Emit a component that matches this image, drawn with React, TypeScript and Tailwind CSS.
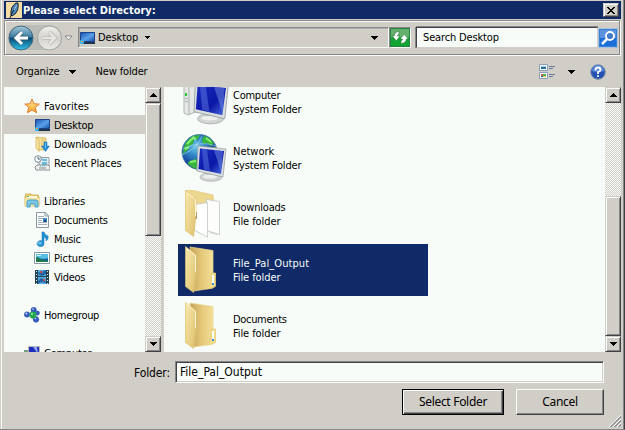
import React from "react";

const raised =
  "border border-t-[#d0cec6] border-l-[#d0cec6] border-r-[#424245] border-b-[#424245] bg-[#d0cec6] shadow-[inset_1px_1px_0_#f9fcf8,inset_-1px_-1px_0_#85858a]";
const dither =
  "bg-[conic-gradient(#d0cec6_25%,#f7fcf8_0_50%,#d0cec6_0_75%,#f7fcf8_0)] bg-[length:2px_2px]";

function Tri({ up = false, className = "" }: { up?: boolean; className?: string }) {
  return (
    <svg className={`shrink-0 ${className}`} width="7" height="4" viewBox="0 0 7 4" shapeRendering="crispEdges">
      <path d={up ? "M3 0h1v1h1v1h1v1h1v1H0V3h1V2h1V1h1z" : "M0 0h7v1H6v1H5v1H4v1H3V3H2V2H1V1H0z"} fill="#000" />
    </svg>
  );
}

function ScrollBar({ before, thumb }: { before: string; thumb: string }) {
  return (
    <div className={`flex w-4 shrink-0 flex-col ${dither}`}>
      <div className={`flex h-4 shrink-0 items-center justify-center ${raised}`}><Tri up /></div>
      <div className={`shrink-0 ${before}`} />
      <div className={`shrink-0 ${thumb} ${raised}`} />
      <div className="flex-1" />
      <div className={`flex h-4 shrink-0 items-center justify-center ${raised}`}><Tri /></div>
    </div>
  );
}

function DesktopIcon() {
  return (
    <svg className="shrink-0" width="16" height="16" viewBox="0 0 16 16">
      <defs><linearGradient id="desk" x1="0" y1="0" x2="1" y2="1"><stop stopColor="#1551b5" /><stop offset=".55" stopColor="#5ba1e8" /><stop offset="1" stopColor="#174fa7" /></linearGradient></defs>
      <path d="M1 2h15v12H1z" fill="#bac7d6" /><path d="M1.5 2.5h14v9h-14z" fill="url(#desk)" stroke="#1e4389" />
      <path d="M2 12h14v2H2z" fill="#1b3450" /><circle cx="3" cy="12" r="2.2" fill="#38b7ed" /><path d="M2 11h1v1H2z" fill="#f9cd3e" /><path d="M3 11h1v1H3z" fill="#e75b32" />
    </svg>
  );
}
function StarIcon() {
  return <svg width="16" height="16" viewBox="0 0 16 16"><defs><linearGradient id="star" x1="0" y1="0" x2="0" y2="1"><stop stopColor="#fff1a1" /><stop offset="1" stopColor="#f5a323" /></linearGradient></defs><path d="M8 1l2 4.8 5.3.3-4.1 3.4 1.5 5.3L8 12l-4.6 2.8 1.4-5.3L.8 6.1 6 5.8z" fill="url(#star)" stroke="#e37a2c" /></svg>;
}
function DownloadIcon() {
  return <svg width="16" height="16" viewBox="0 0 16 16"><path d="M3 1l9 1v12H5z" fill="#ecd389" stroke="#dab757" strokeWidth=".7" /><path d="M6 2v11" stroke="#fff5c2" /><path d="M2 1l3 2.5v12L2 12z" fill="#f9e5a3" stroke="#cfaa45" strokeWidth=".7" /><path d="M10 6h3v4h2.5l-4 5.5-4-5.5H10z" fill="#258fd9" stroke="#176bb4" strokeWidth=".5" /><path d="M11 7h1v5h-1z" fill="#68c6f2" /></svg>;
}
function RecentIcon() {
  return <svg width="16" height="16" viewBox="0 0 16 16"><path d="M5 2.5h10v9H5z" fill="#e3ecf2" stroke="#939ca4" /><path d="M7 4h6v2H9zM8 7h5v3H8z" fill="#65bbdb" /><path d="M1 12l2-2h11l2 2v3H2z" fill="#ecefee" stroke="#8c9293" /><path d="M5 13h7" stroke="#889399" /><circle cx="4" cy="4" r="3.3" fill="#f7fbfc" stroke="#7d8b96" /><path d="M4 2v2h2" fill="none" stroke="#436278" /><path d="M6 11h1M8 11h1M10 11h1" stroke="#64aac6" /></svg>;
}
function LibraryIcon() {
  return <svg width="16" height="16" viewBox="0 0 16 16"><path d="M1 3l1-2h5l1 1h6l1 2v9H1z" fill="#e9cc72" stroke="#cca544" strokeWidth=".8" /><path d="M3 3h10v2H3z" fill="#f9fae0" /><path d="M3 3h2v1H3z" fill="#51b97a" /><path d="M1 5h14v8H1z" fill="#f8e39b" /><path d="M3 14V9q0-2 2-2h7q2 0 2 2v5h-3v-3H6v3z" fill="#7cc7e8" stroke="#4b9fc6" /></svg>;
}
function DocumentIcon() {
  return <svg width="16" height="16" viewBox="0 0 16 16"><path d="M2.5.5h9l3 3v12h-12z" fill="#fff" stroke="#899aa2" /><path d="M11 .5V4h3.5" fill="#dce9ef" stroke="#899aa2" /><path d="M4 4.5h6M4 6.5h5M4 8.5h4M4 10.5h9M4 12.5h9" stroke="#a3b0be" /><path d="M9 6h4v4H9z" fill="#3c8dc4" /><path d="M10 8h2v2h-2z" fill="#253e7c" /></svg>;
}
function MusicIcon() {
  return <svg width="16" height="16" viewBox="0 0 16 16"><path d="M8 1h2q1 3 4 4 1 3-2 5 1-3-2-4v7c0 4-8 3-7-1 1-2 3-3 5-2z" fill="#2390d4" stroke="#1976ad" strokeWidth=".5" /><ellipse cx="5.5" cy="12" rx="2.5" ry="1.5" fill="#67bcec" /></svg>;
}
function PictureIcon() {
  return <svg width="16" height="16" viewBox="0 0 16 16"><path d="M.5 2.5h15v11H.5z" fill="#fff" stroke="#8999a0" /><path d="M2 4h12v8H2z" fill="#57bfe6" /><path d="M2 7c4 1 6 3 12 1v4H2z" fill="#12679c" /><path d="M2 7c3 0 4 3 7 3l5 1v1H2z" fill="#24794d" /><path d="M3 5h4v1H3z" fill="#cceff8" /></svg>;
}
function VideoIcon() {
  return <svg width="16" height="16" viewBox="0 0 16 16"><path d="M1 1h14v14H1z" fill="#244452" /><path d="M4 1h8v6H4zM4 8h8v7H4z" fill="#55aee2" /><path d="M4 3l4 1 2-3 2 1v3L8 7 5 6zM4 12l3-3 4 2 1 3-5-1-3 2z" fill="#2264a6" /><path d="M6 2h2v2H6zM9 10h2v2H9z" fill="#c44f3c" /><path d="M2 2h1v1H2zm0 3h1v1H2zm0 3h1v1H2zm0 3h1v1H2zm0 3h1v1H2zM13 2h1v1h-1zm0 3h1v1h-1zm0 3h1v1h-1zm0 3h1v1h-1zm0 3h1v1h-1z" fill="#d5edf2" /></svg>;
}
function HomegroupIcon() {
  return <svg width="16" height="16" viewBox="0 0 16 16"><g stroke="#b8ceed" strokeWidth="1.5"><path d="M3 8l7-4 4 3-2 6z" fill="none" /></g><g fill="#365bc3" stroke="#2449a0" strokeWidth=".5"><circle cx="3" cy="7.5" r="2.7" /><circle cx="9.7" cy="3" r="2.7" /><circle cx="13.5" cy="6" r="2" /><circle cx="12" cy="12.5" r="2.8" /></g><circle cx="9" cy="8" r="3.4" fill="#21a84b" /><g fill="#cfe2fb"><circle cx="2.4" cy="6.5" r=".9" /><circle cx="9" cy="2" r=".8" /><circle cx="11.4" cy="11.5" r=".8" /></g><circle cx="8" cy="7" r="1" fill="#a8edaf" /></svg>;
}
function SmallComputerIcon() {
  return <svg width="16" height="16" viewBox="0 0 16 16"><path d="M0 5h4v7H0z" fill="#7d918d" /><path d="M1 6h1v1H1z" fill="#35c953" /><path d="M4.5 1.5h11v10h-11z" fill="#1c2ebb" stroke="#b8b8b4" /><path d="M9 2h4l1 7z" fill="#8aa4ee" /></svg>;
}

function Monitor() {
  return (
    <g>
      <ellipse cx="31" cy="43" rx="11" ry="4.3" fill="#d2d5d3" stroke="#aab0b0" strokeWidth=".8" />
      <path d="M27 37l8 2-1 5q-4 1-7-1z" fill="#b4bbbe" />
      <ellipse cx="30" cy="42.5" rx="7" ry="2" fill="#eef0ee" />
      <path d="M18 12l28 3-3 28-26-6z" fill="#dcdfdf" stroke="#9aa3a7" strokeWidth=".8" />
      <path d="M20 14.500l24 2.500-3 23-22.500-5z" fill="url(#screen)" />
      <path d="M22 15l5 .5 3 21.500-6-1.500z" fill="#6f92ea" opacity=".4" />
      <path d="M34 16l9 1-2 21z" fill="#7d9eec" opacity=".45" />
    </g>
  );
}
function ComputerIcon() {
  return (
    <svg className="shrink-0 overflow-visible" width="48" height="48" viewBox="0 0 48 48">
      <defs><linearGradient id="screen" x1="0" y1="0" x2="1" y2="1"><stop stopColor="#1b2cc0" /><stop offset=".6" stopColor="#0b17a6" /><stop offset="1" stopColor="#4c70e0" /></linearGradient></defs>
      <path d="M4 8l6-2 8 1v26l-10 4-4-2z" fill="#e4e7e4" stroke="#aeb5b3" /><path d="M9 9v27M5 20l3 1M5 23l3 1" stroke="#a9b3b3" /><path d="M5 15h2v3H5z" fill="#23c928" />
      <g transform="translate(-6 -10) scale(1.18)"><Monitor /></g>
    </svg>
  );
}
function NetworkIcon() {
  return (
    <svg className="shrink-0" width="48" height="48" viewBox="0 0 48 48">
      <defs><radialGradient id="globe" cx=".4" cy=".35"><stop stopColor="#6cc4e6" /><stop offset=".5" stopColor="#3389c9" /><stop offset="1" stopColor="#174a9c" /></radialGradient></defs>
      <circle cx="19.500" cy="18" r="17.500" fill="url(#globe)" stroke="#4a7da0" strokeWidth=".8" />
      <path d="M4 13q2-7 9-11l7-1-2 4-4 1-1 4-4 2-1 4-3 2-2 3zM24 2q6 1 10 7l-3 3-4-3-4 1-1-4zM8 28l7-3 5 2-1 8q-6 0-11-5zM31 14l5-1 1 6-4-1z" fill="#37b53c" />
      <path d="M7 10l6-6 3 1M10 28l6-1M26 4l5 4M5 15l4-2" stroke="#86ef72" strokeWidth="2" fill="none" />
      <path d="M3 15q18-9 33-3M2 21q16-7 20-19M13 2q9 14 4 33" fill="none" stroke="#b8e5ef" opacity=".55" />
      <Monitor />
    </svg>
  );
}
function FolderIcon({ papers = false }: { papers?: boolean }) {
  const id = papers ? "folder-paper" : "folder-plain";
  return (
    <svg className="shrink-0" width="48" height="48" viewBox="0 0 48 48">
      <defs>
        <linearGradient id={id}><stop stopColor="#c5a45a" /><stop offset=".5" stopColor="#e4c878" /><stop offset="1" stopColor="#f3e09a" /></linearGradient>
        <linearGradient id={`${id}-front`} x1="0" y1="0" x2="1" y2="1"><stop stopColor="#f8e9ac" /><stop offset="1" stopColor="#dfc06c" /></linearGradient>
      </defs>
      {papers ? (
        <>
          <path d="M6 0h5l22 5 1 8-18 20z" fill="#edd78e" stroke="#dfc677" strokeWidth=".7" />
          <path d="M34 41l6 2-3 2-8-2z" fill="#d8dad6" />
          <path d="M26.500 9.500l13 2v33l-13-4z" fill="#fdfefc" stroke="#c2c6c2" strokeWidth=".8" />
          <path d="M15 14.500l12.500-2v34.500L14 40z" fill="#fff" stroke="#c2c6c2" strokeWidth=".8" />
          <path d="M15 22h2v7h-2z" fill="#8f8d70" />
        </>
      ) : (
        <>
          <path d="M10 1l23 3.500V42l-19 3z" fill={`url(#${id})`} stroke="#ecd790" strokeWidth=".7" />
          <path d="M31 27h4.500v13.500L32 42l-6 1 5-5z" fill="#f4dc86" stroke="#e6cb78" strokeWidth=".8" />
          <path d="M32 29h2v8h-2z" fill="#fff" /><path d="M32 37h2v2h-2z" fill="#3b8ee0" />
        </>
      )}
      <path d="M5.500.500L16 9v17l-2.500 20.500-8-6z" fill={`url(#${id}-front)`} stroke="#dcc070" strokeWidth=".7" />
      <path d="M6.500 2l9 7.500V26" fill="none" stroke="#fdf5cf" />
    </svg>
  );
}

function SideRow({ icon, label, nested = false, selected = false, spacing = "" }: { icon: React.ReactNode; label: string; nested?: boolean; selected?: boolean; spacing?: string }) {
  return (
    <div className={`flex h-[19px] shrink-0 items-center gap-1 ${nested ? "pl-[30px]" : "pl-5"} ${selected ? "bg-[#d0cec6]" : ""}`}>
      {icon}<span className={`pt-0.5 ${spacing}`}>{label}</span>
    </div>
  );
}
function FileRow({ icon, name, kind, kindSpacing = "tracking-[-0.09px]", selected = false, spacing = "" }: { icon: React.ReactNode; name: string; kind: string; kindSpacing?: string; selected?: boolean; spacing?: string }) {
  return (
    <div className={`flex h-[52px] w-[250px] shrink-0 items-center gap-[5px] pl-0.5 ${selected ? "bg-[#0f2a66] text-[#f7fcf8]" : ""}`}>
      {icon}
      <div className="pt-0.5 leading-[14px]"><div className={spacing}>{name}</div><div className={kindSpacing}>{kind}</div></div>
    </div>
  );
}

export default function App() {
  return (
    <div className="flex h-[430px] w-[625px] flex-col overflow-hidden border-r border-b border-r-[#424245] border-b-[#85858a] bg-[#d0cec6] pt-px pr-[3px] pl-[4px] font-['DejaVu_Sans_Condensed','DejaVu_Sans',sans-serif] text-[11px] leading-[14px] whitespace-nowrap text-black shadow-[inset_1px_0_0_#d0cec6,inset_2px_0_0_#f7fcf8,inset_-1px_0_0_#85858a]">
      <header className="flex h-[18px] shrink-0 items-center bg-[#0f2a66] pr-0.5 pl-0.5 text-[#f7fcf8]">
        <svg width="16" height="16" viewBox="0 0 16 16"><path d="M0 0h16v16H0z" fill="#f6dca2" /><path d="M5 13q-1-8 5-12l2 0q1 7-3 11l-3 2z" fill="#4c86bd" stroke="#15202c" /><path d="M4 16l2-5 5-8" stroke="#14202b" fill="none" /><path d="M8 8l3-5" stroke="#a9d4ed" /></svg>
        <span className="ml-px flex-1 pt-px font-bold">Please select Directory:</span>
        <button className={`flex h-[14px] w-4 items-center justify-center ${raised}`}><svg width="8" height="7" viewBox="0 0 8 7" shapeRendering="crispEdges"><path d="M0 0h2v1h1v1h2V1h1V0h2v1H7v1H6v1H5v1h1v1h1v1h1v1H6V6H5V5H3v1H2v1H0V6h1V5h1V4h1V3H2V2H1V1H0z" fill="#000" /></svg></button>
      </header>

      <nav className="mt-px mr-px flex h-[35px] shrink-0 items-center border border-[#85858a] shadow-[inset_1px_1px_0_#f7fcf8,inset_-1px_-1px_0_#d0cec6,1px_1px_0_#f7fcf8]">
        <svg className="ml-[3px] shrink-0" width="65" height="30" viewBox="0 0 65 30">
          <defs>
            <linearGradient id="back" x1="0" y1="0" x2="0" y2="1"><stop stopColor="#a9cadb" /><stop offset=".46" stopColor="#397b9f" /><stop offset=".5" stopColor="#0a4770" /><stop offset="1" stopColor="#30c6ed" /></linearGradient>
            <linearGradient id="forward" x1="0" y1="0" x2="0" y2="1"><stop stopColor="#f0f0ed" /><stop offset=".5" stopColor="#d3d2cc" /><stop offset="1" stopColor="#eceae6" /></linearGradient>
          </defs>
          <path d="M13 2h28q13 1 13 13t-13 12H13Q0 27 0 15T13 2z" fill="#bbbdb9" />
          <circle cx="13" cy="15" r="12" fill="url(#back)" stroke="#43687c" /><circle cx="41.500" cy="15" r="12" fill="url(#forward)" stroke="#a2a5a2" />
          <path d="M20 15H8m6-6l-6 6 6 6" fill="none" stroke="#315c75" strokeWidth="4.500" /><path d="M20 15H8m6-6l-6 6 6 6" fill="none" stroke="#fff" strokeWidth="3" />
          <path d="M35 15h12m-6-6l6 6-6 6" fill="none" stroke="#b4b5b1" strokeWidth="4" /><path d="M35 15h12m-6-6l6 6-6 6" fill="none" stroke="#e6e5e1" strokeWidth="2.500" />
          <path d="M57 13h7l-3.500 4z" fill="#f7fcf8" stroke="#85858a" />
        </svg>
        <div className="ml-[5px] flex h-[21px] w-[311px] shrink-0 items-center border-t border-r border-b border-l border-t-[#85858a] border-r-[#f7fcf8] border-b-[#f7fcf8] border-l-[#85858a] shadow-[inset_1px_1px_0_#b0aea9]">
          <DesktopIcon /><span className="ml-[3px] tracking-[-0.1px]">Desktop</span><Tri className="ml-[7px] h-[3px] w-[5px]" />
          <div className="flex-1" /><Tri className="mr-[10px]" />
        </div>
        <button className="flex h-[21px] w-[22px] shrink-0 items-center justify-center border border-[#85858a] border-r-[#f7fcf8] border-b-[#f7fcf8]">
          <svg className="shrink-0" width="20" height="19" viewBox="0 0 19 18" preserveAspectRatio="none"><path d="M0 0h19v18H0z" fill="#25863d" /><path d="M1 1h17v8H1z" fill="#66b06d" /><path d="M1 9h17v8H1z" fill="#13a533" /><path d="M8.500 3v2.500L7 7.500h2.500L6 12 2 7.500h2Q4 4 8.500 3zM10.500 15v-2.500l1.500-2H9.500L13.500 6l4 4.500h-2q0 3.500-5 4.500z" fill="#fff" stroke="#1b6e31" strokeWidth=".5" /></svg>
        </button>
        <div className="ml-[5px] flex h-[21px] w-[182px] shrink-0 items-center border border-t-[#424245] border-r-[#d0cec6] border-b-[#d0cec6] border-l-[#424245] bg-[#f7fcf8] pl-[6px] tracking-[-0.15px] shadow-[0_-1px_0_#85858a,-1px_0_0_#85858a]"><span className="pt-px">Search Desktop</span></div>
        <svg className="shrink-0" width="20" height="20" viewBox="0 0 20 20"><path d="M.5.500h19v19H.5z" fill="#3a7fd0" stroke="#a9c2e0" /><path d="M2 2h16v8H2z" fill="#5a92dd" /><path d="M2 10h16v8H2z" fill="#1a6fd8" /><path d="M4 16l5-5" stroke="#fff" strokeWidth="2.500" /><circle cx="12" cy="8" r="4" fill="#447bc8" stroke="#fff" strokeWidth="1.800" /></svg>
      </nav>

      <div className="flex h-8 shrink-0 items-center pt-px pl-3">
        <span className="tracking-[-0.1px]">Organize</span><Tri className="ml-[9px]" /><span className="ml-5 tracking-[-0.15px]">New folder</span>
        <div className="flex-1" />
        <svg width="16" height="16" viewBox="0 0 16 16"><path d="M.5.500h8v6h-8zM.5 8.500h8v6h-8z" fill="#f7fcf8" stroke="#8b9fba" /><path d="M2 2h5v1H2z" fill="#9ccfe6" /><path d="M2 3h5v2H2z" fill="#28709b" /><path d="M2 10h2v2H2z" fill="#d85e45" /><path d="M4 10h3v2H4z" fill="#40b452" /><path d="M2 12h2v1H2z" fill="#2b64c5" /><path d="M4 12h3v1H4z" fill="#f1c33f" /><path d="M10 2.500h6M10 4.500h4M10 10.500h6M10 12.500h4" stroke="#687a95" /></svg>
        <Tri className="ml-[13px]" />
        <svg className="mr-[15px] ml-[15px]" width="16" height="16" viewBox="0 0 16 16"><circle cx="8" cy="8" r="7.300" fill="#2552b1" stroke="#8291ab" /><path d="M2 7a6 6 0 0112 0q-6 2-12 0" fill="#5b89d8" /><path d="M5.500 6.500q0-3 2.500-3t2.500 2.300q0 1.400-2.500 2.400V10M8 11.200v1.800" fill="none" stroke="#fff" strokeWidth="1.800" /></svg>
      </div>

      <main className="flex h-[265px] shrink-0 bg-[#f7fcf8]">
        <aside className="flex w-[141px] shrink-0 flex-col overflow-hidden pt-[9px]">
          <SideRow icon={<StarIcon />} label="Favorites" spacing="tracking-[0.05px]" />
          <SideRow icon={<DesktopIcon />} label="Desktop" nested selected spacing="tracking-[-0.2px]" />
          <SideRow icon={<DownloadIcon />} label="Downloads" nested spacing="tracking-[-0.2px]" />
          <SideRow icon={<RecentIcon />} label="Recent Places" nested spacing="tracking-[-0.1px]" />
          <div className="h-[19px] shrink-0" />
          <SideRow icon={<LibraryIcon />} label="Libraries" spacing="tracking-[-0.2px]" />
          <SideRow icon={<DocumentIcon />} label="Documents" nested spacing="tracking-[-0.32px]" />
          <SideRow icon={<MusicIcon />} label="Music" nested spacing="tracking-[-0.3px]" />
          <SideRow icon={<PictureIcon />} label="Pictures" nested />
          <SideRow icon={<VideoIcon />} label="Videos" nested spacing="tracking-[-0.3px]" />
          <div className="h-[19px] shrink-0" />
          <SideRow icon={<HomegroupIcon />} label="Homegroup" spacing="tracking-[-0.32px]" />
          <div className="h-[19px] shrink-0" />
          <SideRow icon={<SmallComputerIcon />} label="Computer" spacing="tracking-[-0.25px]" />
        </aside>
        <ScrollBar before="h-0" thumb="h-[133px]" />
        <div className="w-[3px] shrink-0 bg-[#d0cec6]" />
        <section className="flex min-w-0 flex-1 flex-col gap-1 overflow-hidden pl-[14px]">
          <div className="-mt-[11px] shrink-0"><FileRow icon={<ComputerIcon />} name="Computer" kind="System Folder" spacing="tracking-[-0.25px]" kindSpacing="tracking-[-0.17px]" /></div>
          <FileRow icon={<NetworkIcon />} name="Network" kind="System Folder" kindSpacing="tracking-[-0.17px]" />
          <FileRow icon={<FolderIcon papers />} name="Downloads" kind="File folder" spacing="tracking-[-0.2px]" />
          <FileRow icon={<FolderIcon />} name="File_Pal_Output" kind="File folder" selected spacing="tracking-[0.07px]" />
          <FileRow icon={<FolderIcon />} name="Documents" kind="File folder" spacing="tracking-[-0.32px]" />
        </section>
        <ScrollBar before="h-[93px]" thumb="h-[140px]" />
      </main>

      <footer className="flex flex-1 flex-col">
        <div className="mt-[9px] flex h-[22px] shrink-0 items-center">
          <label className="w-[171px] pr-[5px] pt-px text-right text-[12px] tracking-[-0.12px]">Folder:</label>
          <div className="flex h-[22px] w-[429px] items-center border border-t-[#85858a] border-r-[#f7fcf8] border-b-[#f7fcf8] border-l-[#85858a] bg-[#f7fcf8] pl-[4px] text-[12px] shadow-[inset_1px_1px_0_#424245,inset_-1px_-1px_0_#d0cec6]">File_Pal_Output</div>
        </div>
        <div className="mt-[6px] flex items-start pl-[398px] font-['Noto_Sans',sans-serif] text-[12px]">
          <button className="h-[26px] w-[102px] shrink-0 border border-black bg-[#d0cec6] tracking-[-0.3px] shadow-[inset_1px_1px_0_#f7fcf8,inset_-1px_-1px_0_#424245,inset_-2px_-2px_0_#85858a]">Select Folder</button>
          <button className="ml-3 h-[26px] w-[88px] shrink-0 border border-t-[#f7fcf8] border-r-[#424245] border-b-[#424245] border-l-[#f7fcf8] bg-[#d0cec6] tracking-[-0.3px] shadow-[inset_-1px_-1px_0_#85858a]">Cancel</button>
          <svg className="mt-[26px] ml-[5px] shrink-0" width="12" height="12" viewBox="0 0 12 12"><path d="M0 12L12 0M4 12l8-8M8 12l4-4" stroke="#f7fcf8" /><path d="M1 12L12 1M2 12L12 2M5 12l7-7M6 12l6-6M9 12l3-3M10 12l2-2" stroke="#85858a" strokeWidth=".8" /></svg>
        </div>
      </footer>
    </div>
  );
}
